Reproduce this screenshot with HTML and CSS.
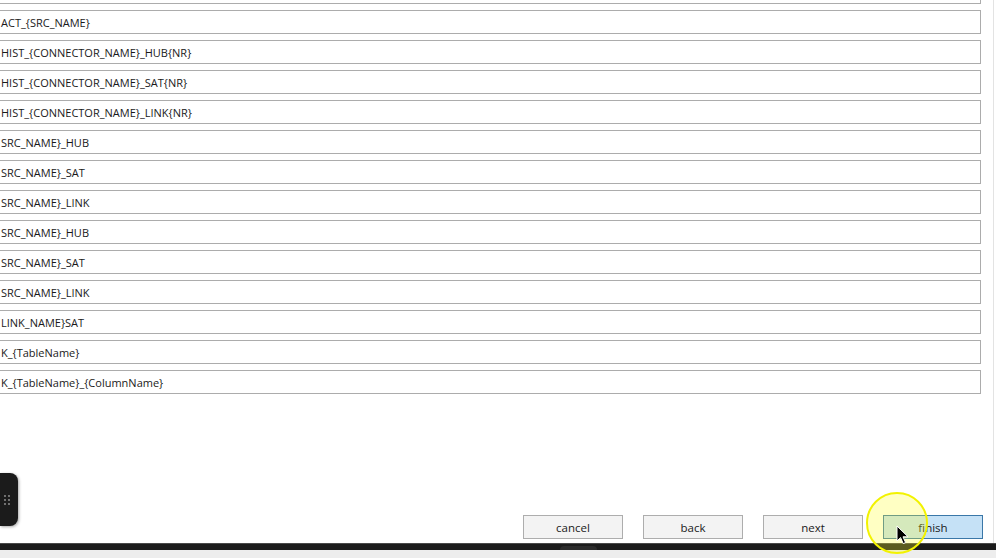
FILE: index.html
```html
<!DOCTYPE html>
<html lang="en">
<head>
    <meta charset="UTF-8">
    <meta name="viewport" content="width=device-width, initial-scale=1.0">
    <title>Naming conventions</title>
    <link rel="stylesheet" href="styles.css">
</head>
<body>
    <div class="window">
        <div class="wizard">
            <div class="fields">
                <div class="field"></div>
                <div class="field">ACT_{SRC_NAME}</div>
                <div class="field">HIST_{CONNECTOR_NAME}_HUB{NR}</div>
                <div class="field">HIST_{CONNECTOR_NAME}_SAT{NR}</div>
                <div class="field">HIST_{CONNECTOR_NAME}_LINK{NR}</div>
                <div class="field">SRC_NAME}_HUB</div>
                <div class="field">SRC_NAME}_SAT</div>
                <div class="field">SRC_NAME}_LINK</div>
                <div class="field">SRC_NAME}_HUB</div>
                <div class="field">SRC_NAME}_SAT</div>
                <div class="field">SRC_NAME}_LINK</div>
                <div class="field">LINK_NAME}SAT</div>
                <div class="field">K_{TableName}</div>
                <div class="field">K_{TableName}_{ColumnName}</div>
            </div>
            <div class="buttons">
                <button class="btn">cancel</button>
                <button class="btn">back</button>
                <button class="btn">next</button>
                <button class="btn btn-hover">finish</button>
            </div>
        </div>
        <div class="scroll-edge"></div>
    </div>
    <div class="taskbar">
        <span class="task-item"></span>
    </div>
    <div class="foot"></div>

    <!-- floating overlays -->
    <div class="handle">
        <svg width="6" height="10" viewBox="0 0 6 10">
            <circle cx="1" cy="1" r="0.9" fill="#9a9a9a"/>
            <circle cx="5" cy="1" r="0.9" fill="#9a9a9a"/>
            <circle cx="1" cy="5" r="0.9" fill="#9a9a9a"/>
            <circle cx="5" cy="5" r="0.9" fill="#9a9a9a"/>
            <circle cx="1" cy="9" r="0.9" fill="#9a9a9a"/>
            <circle cx="5" cy="9" r="0.9" fill="#9a9a9a"/>
        </svg>
    </div>
    <div class="click-ring"></div>
    <svg class="cursor" width="14" height="20" viewBox="0 0 14 20">
        <path d="M1 1 L1 16 L4.6 12.6 L7.2 18.6 L9.6 17.6 L7 11.8 L12 11.8 Z" fill="#000" stroke="#fff" stroke-width="1"/>
    </svg>
</body>
</html>
```

FILE: styles.css
```css
body {
    margin: 0;
    font-family: "Open Sans", "Noto Sans", Arial, sans-serif;
    font-size: 11px;
    color: #1a1a1a;
    background: #fff;
    overflow: hidden;
    width: 996px;
    height: 558px;
}
.window {
    display: flex;
    height: 543px;
}
.wizard {
    width: 993px;
    display: flex;
    flex-direction: column;
    justify-content: space-between;
}
.scroll-edge {
    width: 1px;
    background: #e3e3e3;
}
.fields {
    display: flex;
    flex-direction: column;
    gap: 6px;
    margin-top: -20px;
    margin-left: -30px;
    margin-right: 12px;
}
.field {
    height: 22px;
    line-height: 24px;
    border: 1px solid #acacac;
    background: #fff;
    padding-left: 30px;
    white-space: nowrap;
    overflow: hidden;
}
.buttons {
    display: flex;
    justify-content: flex-end;
    gap: 20px;
    padding-right: 10px;
    margin-bottom: 4px;
}
.btn {
    width: 100px;
    height: 24px;
    border: 1px solid #adadad;
    background: #f3f3f3;
    font-family: inherit;
    font-size: 11.5px;
    color: #1a1a1a;
    padding: 1px 0 0;
}
.btn-hover {
    background: #c5e1f6;
    border-color: #3a77a8;
}
.taskbar {
    height: 7px;
    background: #1c1c1c;
    border-top: 1px solid #4a4a4a;
    box-sizing: border-box;
    display: flex;
    align-items: flex-end;
}
.task-item {
    margin-left: 560px;
    width: 37px;
    height: 4px;
    background: #2c2c2c;
    border-radius: 4px 4px 0 0;
}
.foot {
    height: 8px;
    background: #ededed;
}
.handle {
    position: absolute;
    left: 0;
    top: 473px;
    width: 18px;
    height: 53px;
    background: #1b1b1b;
    border-radius: 0 8px 8px 0;
    box-shadow: 1px 1px 3px rgba(0, 0, 0, 0.35);
    display: flex;
    align-items: center;
    justify-content: center;
    padding-right: 1px;
    box-sizing: border-box;
}
.handle svg {
    margin-left: -3px;
}
.click-ring {
    position: absolute;
    left: 866px;
    top: 492px;
    width: 58px;
    height: 58px;
    border: 2px solid #f2f200;
    border-radius: 50%;
    background: rgba(255, 255, 40, 0.28);
}
.cursor {
    position: absolute;
    left: 896px;
    top: 525px;
}
```
